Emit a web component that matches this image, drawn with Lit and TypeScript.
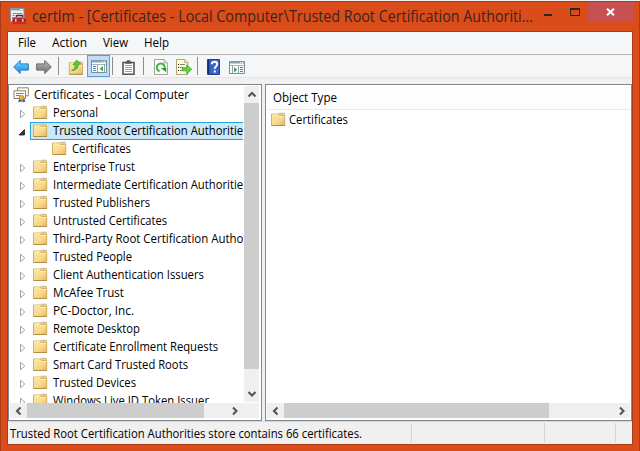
import { LitElement, html, svg, css } from "lit";
import { customElement } from "lit/decorators.js";

// A single line of text set to an exact advance width.
const line = (text: string, width: number, size = 12, cls = "") => html`
  <svg class="line ${cls}" width=${width} height=${size * 1.5}>
    <text x="0" y=${size * 1.12} font-size=${size} textLength=${width} lengthAdjust="spacingAndGlyphs">${text}</text>
  </svg>`;

const lineCss = css`
  .line { display: block; flex: none; overflow: visible; font-family: "Open Sans", "Noto Sans", sans-serif; fill: #000; }
  svg { display: block; flex: none; }
`;

const folderShape = svg`
  <path d="M7 4l1-1.8h5.5V5z" fill="#f6e7ae" stroke="#d2ab58" stroke-width=".7"/>
  <path d="M9.5 3h3" stroke="#7fb4cf" stroke-width=".8"/>
  <path d="M.5 3H7l1 1.5h5.7v10H.5z" fill="url(#fold)" stroke="#d0a855" stroke-width=".9"/>
  <path d="M1.3 3.9h5.3l1 1.5h5.6" fill="none" stroke="#fff3c2" stroke-width=".9"/>
  <path d="M.5 14.5H14" stroke="#b08a44" stroke-width=".9"/>`;
const foldGrad = svg`<defs><linearGradient id="fold" x1="0" y1="0" x2="1" y2="1"><stop offset="0" stop-color="#fde8a8"/><stop offset=".6" stop-color="#f6d888"/><stop offset="1" stop-color="#dfb662"/></linearGradient></defs>`;

const folder = html`<svg width="16" height="16" viewBox="0 0 16 16">${foldGrad}<g transform="translate(0 -1)">${folderShape}</g></svg>`;

const certStore = html`<svg width="16" height="16" viewBox="0 0 16 16">
  <path d="M4.5.8h10.8v8H4.5z" fill="#fffdf4" stroke="#8f8468"/>
  <path d="M1 3.8h11.5v7.7H1z" fill="#fff" stroke="#8d8366"/>
  <path d="M3 6.5h7.5M3 8.5h4" stroke="#6c7f9d"/>
  <path d="M6.2 11.5L5.2 15.5l2-1 1.2 1 .5-3 1 3 1.2-1 1.4.6-1.4-4z" fill="#225da6"/>
  <circle cx="8.6" cy="10.8" r="2.4" fill="#f5b629" stroke="#bd7e13" stroke-width=".8"/>
</svg>`;

const appIcon = html`<svg width="17" height="17" viewBox="0 0 17 17">
  <path d="M.5.5h13.5v13H.5z" fill="#edf1f4" stroke="#8a9297"/>
  <path d="M1 1.5h12.8" stroke="#8b9ca6" stroke-width="1.8"/>
  <path d="M10 1.5h3" stroke="#e6edf2"/>
  <path d="M2.5 5.5h4M2.5 7.5h2M2.5 10h2M7 5.5h5" stroke="#79868e"/>
  <path d="M6.5 9.5v-2h6v2" fill="none" stroke="#403236" stroke-width="1.4"/>
  <path d="M2.5 9h13.6v7H2.5z" fill="#c9282d"/>
  <path d="M2.5 12.3h13.6" stroke="#8c1c21"/>
  <path d="M2.5 9.5h13.6" stroke="#e8645e"/>
  <path d="M5.8 11v2.7M12.8 11v2.7" stroke="#e8e9eb" stroke-width="1.3"/>
</svg>`;

const arrow = (dir: "back" | "next") => html`<svg width="16" height="16" viewBox="0 0 16 16">
  <defs>
    <linearGradient id=${dir} x1="0" y1="0" x2="0" y2="1">
      <stop offset="0" stop-color=${dir === "back" ? "#8bdcff" : "#c0c0c0"}/>
      <stop offset=".5" stop-color=${dir === "back" ? "#42b2f3" : "#929292"}/>
      <stop offset="1" stop-color=${dir === "back" ? "#168bd8" : "#747474"}/>
    </linearGradient>
  </defs>
  <path transform=${dir === "back" ? "" : "translate(16 0) scale(-1 1)"}
    d="M.7 8L7.2 1.5v3.4h8.1v6.2H7.2v3.4z" fill="url(#${dir})" stroke=${dir === "back" ? "#2879b8" : "#666"} stroke-linejoin="round"/>
</svg>`;

const upFolder = html`<svg width="16" height="16" viewBox="0 0 16 16">${foldGrad}
  <g transform="translate(.8 .8)">${folderShape}</g>
  <path d="M3.5 11.6C6.4 10.6 7.4 8.4 7.2 5.6L5 5.9 8.6 1l4.2 4-2.4.3C10.4 9 8 11.6 3.5 11.6z" fill="#5ecb34" stroke="#35971d" stroke-width=".7"/>
</svg>`;

const paneIcon = (right: boolean) => html`<svg width="16" height="13" viewBox="0 0 16 13">
  <path d="M.5.5h15v12H.5z" fill="#fcfdfe" stroke="#798d9c"/>
  <path d="M1 1.5h14" stroke="#8ba2b3" stroke-width="2"/>
  <path d="M11 1.5h1M13 1.5h1" stroke="#fff"/>
  <path d="M1 4.5h14" stroke="#a7b6c2"/>
  ${right
    ? svg`<path d="M3.5 5v7.5M9.5 5v7.5" stroke="#8ea0ae"/><path d="M11 6.5h3M11 8.5h3M11 10.5h3" stroke="#4983b6"/><path d="M5 6l3.3 2.7L5 11.4z" fill="#42ae31"/>`
    : svg`<path d="M6.5 5v7.5M13.5 5v7.5" stroke="#8ea0ae"/><path d="M2 6.5h3M2 8.5h3M2 10.5h3" stroke="#4983b6"/><path d="M12 6L8.7 8.7 12 11.4z" fill="#42ae31"/>`}
</svg>`;

const clipboard = html`<svg width="13" height="15" viewBox="0 0 13 15">
  <path d="M1 2.5h11v11.7H1z" fill="#fff" stroke="#545454" stroke-width="1.6"/>
  <path d="M3.5 3.7V1.5H5V.3h3v1.2h1.5v2.2z" fill="#555"/>
  <path d="M3 5.5h7M3 7.5h7M3 9.5h7M3 11.5h7" stroke="#a1a1a1"/>
</svg>`;

const refresh = html`<svg width="14" height="16" viewBox="0 0 14 16">
  <path d="M.5.5h9.6l3.4 3.4v11.6H.5z" fill="#fbfbfa" stroke="#a6a69f"/>
  <path d="M10 .7V4h3.4" fill="#ddd" stroke="#a6a69f" stroke-width=".8"/>
  <path d="M5.6 12.3A4 4 0 1 1 10.5 10" fill="none" stroke="#3fb53a" stroke-width="2"/>
  <path d="M6.8 9h5.5v4.2z" fill="#2da22b"/>
</svg>`;

const exportList = html`<svg width="16" height="16" viewBox="0 0 16 16">
  <path d="M.5.5h8.3l3 3v12H.5z" fill="#fff9dc" stroke="#b3a574"/>
  <path d="M8.6.7v3h3" fill="#f2e3ad" stroke="#b3a574" stroke-width=".8"/>
  <path d="M2 5.5h1M2 8.5h1M2 11.5h1" stroke="#222"/>
  <path d="M4 5.5h5M4 8.5h3M4 11.5h3" stroke="#8b866e"/>
  <path d="M6.5 8.8h4.2V5.9l5 4.4-5 4.4v-2.9H6.5z" fill="#6bd044" stroke="#3ba328" stroke-width=".8"/>
</svg>`;

const help = html`<svg width="13" height="16" viewBox="0 0 13 16">
  <path d="M.5.5h12v15H.5z" fill="#3864c8" stroke="#233f91"/>
  <path d="M1.5 1v14" stroke="#182f76" stroke-width="1.6"/>
  <path d="M4.8 5.2c.1-3.3 5.4-3.3 5.4 0 0 2-2.5 2.2-2.5 4.7" fill="none" stroke="#fff" stroke-width="1.9"/>
  <path d="M6.8 11.5h2v2h-2z" fill="#fff"/>
</svg>`;

const chevrons: Record<string, string> = {
  up: "M1.5 6.5L5 3l3.5 3.5",
  down: "M1.5 3L5 6.5 8.5 3",
  left: "M6.5 1.5L3 5l3.5 3.5",
  right: "M3 1.5L6.5 5 3 8.5",
};

@customElement("scroll-bar")
class ScrollBar extends LitElement {
  static properties = { vertical: { type: Boolean }, span: { type: Number } };
  declare vertical: boolean;
  declare span: number;
  static styles = css`
    :host { display: block; background: #efefef; }
    .bar { display: flex; width: 100%; height: 100%; }
    .vertical { flex-direction: column; }
    .end { flex: 0 0 17px; display: flex; align-items: center; justify-content: center; }
    .track { flex: 1; display: flex; flex-direction: inherit; }
    .thumb { background: #cdcdcd; }
    path { fill: none; stroke: #555; stroke-width: 2.1; }
  `;
  private button(dir: string) {
    return html`<div class="end"><svg width="10" height="10" viewBox="0 0 10 10"><path d=${chevrons[dir]}></path></svg></div>`;
  }
  render() {
    return html`<div class="bar ${this.vertical ? "vertical" : ""}">
      ${this.button(this.vertical ? "up" : "left")}
      <div class="track"><div class="thumb" style="flex: 0 0 ${this.span}px"></div></div>
      ${this.button(this.vertical ? "down" : "right")}
    </div>`;
  }
}

interface Node { label: string; width: number; open?: boolean; child?: boolean; }

const nodes: Node[] = [
  { label: "Personal", width: 45 },
  { label: "Trusted Root Certification Authorities", width: 195.5, open: true },
  { label: "Certificates", width: 59, child: true },
  { label: "Enterprise Trust", width: 82 },
  { label: "Intermediate Certification Authorities", width: 195.5 },
  { label: "Trusted Publishers", width: 97 },
  { label: "Untrusted Certificates", width: 114 },
  { label: "Third-Party Root Certification Authorities", width: 217 },
  { label: "Trusted People", width: 79 },
  { label: "Client Authentication Issuers", width: 151 },
  { label: "McAfee Trust", width: 71 },
  { label: "PC-Doctor, Inc.", width: 81 },
  { label: "Remote Desktop", width: 87 },
  { label: "Certificate Enrollment Requests", width: 165 },
  { label: "Smart Card Trusted Roots", width: 135 },
  { label: "Trusted Devices", width: 83 },
  { label: "Windows Live ID Token Issuer", width: 156 },
];

@customElement("cert-tree")
class CertTree extends LitElement {
  static styles = [lineCss, css`
    :host { display: block; overflow: hidden; }
    .row { height: 18px; display: flex; align-items: center; }
    .root { padding-left: 3px; gap: 5px; }
    .twist { width: 20px; flex: none; display: flex; justify-content: flex-end; padding: 2px 4px 0 0; box-sizing: border-box; }
    .item { height: 18px; flex: none; display: flex; align-items: center; gap: 4px; padding: 0 4px 0 3px; min-width: 223px; box-sizing: border-box; }
    .child { padding-left: 22px; }
    .selected { background: #cbe8f6; border: 1px solid #26a0da; padding-left: 2px; }
  `];
  render() {
    return html`
      <div class="row root">${certStore}${line("Certificates - Local Computer", 155)}</div>
      ${nodes.map((n) => html`<div class="row">
        <div class="twist">${n.child ? "" : html`<svg width="8" height="10" viewBox="0 0 8 10">
          ${n.open
            ? svg`<path d="M6.5 2.5V8H1z" fill="#333" stroke="#222" stroke-width=".8"/>`
            : svg`<path d="M2.5 1.2v7.6L6.8 5z" fill="#fff" stroke="#a2a2a2"/>`}
        </svg>`}</div>
        <div class="item ${n.open ? "selected" : ""} ${n.child ? "child" : ""}">${folder}${line(n.label, n.width)}</div>
      </div>`)}`;
  }
}

@customElement("app-root")
class AppRoot extends LitElement {
  static styles = [lineCss, css`
    :host { display: block; width: 640px; height: 451px; background: #f0f0f0; padding-top: 1px; box-sizing: border-box; overflow: hidden; }
    .window { height: 450px; box-sizing: border-box; background: #da4d1a; border: 1px solid #a93c15; border-bottom: 0; display: flex; flex-direction: column; padding: 0 6px; }
    .title { height: 29px; flex: none; display: flex; align-items: flex-start; padding-left: 3px; }
    .title > svg:first-child { margin-top: 6px; }
    .caption { fill: #39251f; margin: 3px 0 0 5px; }
    .controls { flex: 1; display: flex; justify-content: flex-end; }
    .min { width: 8px; height: 2px; background: #2c2422; margin: 12px 18px 0 0; flex: none; }
    .max { width: 10px; height: 8px; box-sizing: border-box; border: 1px solid #2c2422; border-top-width: 2px; margin: 6px 8px 0 0; flex: none; }
    .close { width: 45px; height: 20px; background: #c75050; display: flex; align-items: center; justify-content: center; flex: none; }
    .client { flex: none; height: 412px; border: 1px solid #a93c15; display: flex; flex-direction: column; background: #f0f0f0; }
    .menu { height: 20px; flex: none; background: #f5f6f7; border-bottom: 1px solid #b3b3b3; display: flex; gap: 16px; padding: 2px 0 0 10px; }
    .tools { height: 22px; flex: none; background: #f5f6f7; border-bottom: 1px solid #e5e5e5; display: flex; align-items: center; padding-left: 1px; }
    .tool { width: 23px; height: 22px; flex: none; display: flex; align-items: center; justify-content: center; padding-top: 2px; box-sizing: border-box; }
    .on { background: #bfdcf8; border: 1px solid #5a9bdc; padding-top: 1px; }
    .sep { width: 1px; height: 18px; background: #8d8d8d; flex: none; }
    .s1 { margin: 0 5px 0 3px; } .s2 { margin: 0 4px 0 2px; } .s3 { margin: 0 5px 0 3px; } .s4 { margin: 0 4px 0 2px; }
    .panes { height: 337px; flex: none; margin-top: 6px; display: flex; gap: 3px; }
    .pane { border: 1px solid #828790; background: #fff; box-sizing: border-box; padding: 1px; display: flex; }
    .left { width: 254px; flex-direction: column; padding-bottom: 2px; }
    .upper { display: flex; height: 317px; flex: none; }
    cert-tree { width: 233px; height: 317px; }
    .vbar { width: 15px; height: 316px; margin-left: 1px; }
    .lower { height: 15px; display: flex; background: #efefef; width: 249px; }
    .lower scroll-bar { width: 233px; }
    .right { width: 367px; flex-direction: column; }
    .header { height: 20px; flex: none; border-bottom: 1px solid #e0edf7; padding: 3px 0 0 6px; background: #fdfdfd; }
    .entry { display: flex; align-items: center; gap: 2px; height: 18px; padding: 1px 0 0 4px; }
    .spring { flex: 1; }
    .right scroll-bar { height: 15px; margin-bottom: 1px; width: 363px; }
    .status { flex: 1; display: flex; align-items: center; border-top: 1px solid #d7d7d7; box-sizing: border-box; padding-left: 2px; }
    .cell { height: 20px; border-right: 1px solid #d5d5d5; box-sizing: border-box; display: flex; align-items: flex-end; }
    .c1 { width: 402px; } .c2 { width: 133px; } .c3 { width: 71px; }
  `];
  render() {
    return html`<div class="window">
      <div class="title">
        ${appIcon}
        ${line("certlm - [Certificates - Local Computer\\Trusted Root Certification Authoriti...", 501, 15.5, "caption")}
        <div class="controls">
          <div class="min"></div><div class="max"></div>
          <div class="close"><svg width="9" height="8" viewBox="0 0 9 8"><path d="M1 .7l7 6.6M8 .7L1 7.3" stroke="#fff" stroke-width="2"/></svg></div>
        </div>
      </div>
      <div class="client">
        <div class="menu">${line("File", 18)}${line("Action", 35)}${line("View", 25)}${line("Help", 25)}</div>
        <div class="tools">
          <div class="tool">${arrow("back")}</div><div class="tool">${arrow("next")}</div>
          <div class="sep s1"></div>
          <div class="tool">${upFolder}</div>
          <div class="tool on">${paneIcon(false)}</div>
          <div class="sep s2"></div>
          <div class="tool">${clipboard}</div>
          <div class="sep s3"></div>
          <div class="tool">${refresh}</div><div class="tool">${exportList}</div>
          <div class="sep s4"></div>
          <div class="tool">${help}</div><div class="tool">${paneIcon(true)}</div>
        </div>
        <div class="panes">
          <div class="pane left">
            <div class="upper"><cert-tree></cert-tree><scroll-bar class="vbar" .vertical=${true} .span=${266}></scroll-bar></div>
            <div class="lower"><scroll-bar .span=${177}></scroll-bar></div>
          </div>
          <div class="pane right">
            <div class="header">${line("Object Type", 64)}</div>
            <div class="entry">${folder}${line("Certificates", 59)}</div>
            <div class="spring"></div>
            <scroll-bar .span=${265}></scroll-bar>
          </div>
        </div>
        <div class="status">
          <div class="cell c1">${line("Trusted Root Certification Authorities store contains 66 certificates.", 352)}</div>
          <div class="cell c2"></div><div class="cell c3"></div>
        </div>
      </div>
    </div>`;
  }
}
